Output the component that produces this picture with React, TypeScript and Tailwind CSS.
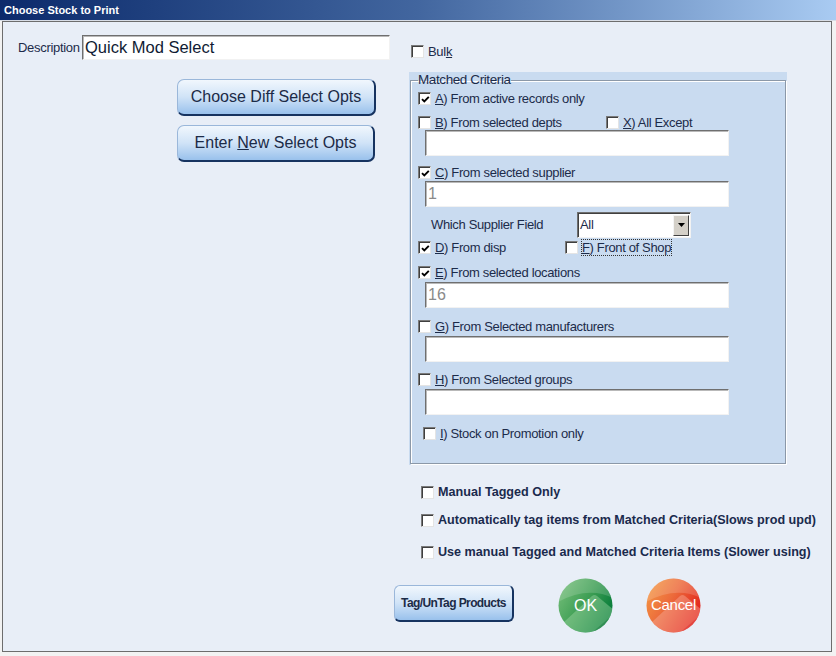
import React from "react";

const FONT = { fontFamily: '"Liberation Sans", Arial, sans-serif' };

function Check({ checked = false }: { checked?: boolean }) {
  return (
    <span className="relative inline-flex h-[13px] w-[13px] shrink-0 items-center justify-center border border-t-[#7a7a7a] border-l-[#7a7a7a] border-r-[#e4e4e4] border-b-[#e4e4e4] bg-white shadow-[inset_1px_1px_0_#3f3f3f]">
      {checked && (
        <svg width="9" height="9" viewBox="0 0 9 9" className="ml-[1px] mt-[1px]">
          <path d="M1 4.2 L3.3 6.5 L7.8 1.8" stroke="#000" strokeWidth="1.9" fill="none" />
        </svg>
      )}
    </span>
  );
}

function CbLabel({
  checked,
  u,
  rest,
  focus = false,
}: {
  checked?: boolean;
  u: string;
  rest: string;
  focus?: boolean;
}) {
  return (
    <span className="flex h-[13px] items-center">
      <Check checked={checked} />
      <span
        className={
          "ml-[4px] whitespace-nowrap text-[13px] leading-[15px] tracking-[-0.35px] text-[#1c2b4a]" +
          (focus ? " outline outline-1 outline-dotted outline-[#333]" : "")
        }
      >
        <span className="underline">{u}</span>
        {rest}
      </span>
    </span>
  );
}

function TextBox({ value = "" }: { value?: string }) {
  return (
    <div className="ml-[14px] flex h-[26px] w-[304px] items-center border border-t-[#6f6f6f] border-l-[#6f6f6f] border-r-[#f2f2f2] border-b-[#f2f2f2] bg-white pl-[2px] shadow-[inset_1px_1px_0_#b9b9b9] text-[16px] text-[#8a8a8a]">
      {value}
    </div>
  );
}

function BigButton({ children, w }: { children: React.ReactNode; w: string }) {
  return (
    <div
      className={
        "flex h-[37px] items-center justify-center rounded-[7px] border border-[#9ab7da] border-b-2 border-r-2 border-b-[#163360] border-r-[#163360] bg-gradient-to-b from-[#f1f7fd] via-[#d0e3f7] to-[#99c1ec] text-[16px] text-[#1c2b47] " +
        w
      }
    >
      {children}
    </div>
  );
}

function Orb({ kind }: { kind: "ok" | "cancel" }) {
  const ok = kind === "ok";
  const id = ok ? "gok" : "gcan";
  return (
    <div className="relative h-[55px] w-[55px]">
      <svg width="55" height="55" viewBox="0 0 55 55">
        <defs>
          <linearGradient id={id} x1="0" y1="0" x2="1" y2="0.6">
            {ok ? (
              <>
                <stop offset="0" stopColor="#7cc27e" />
                <stop offset="0.55" stopColor="#3f9f55" />
                <stop offset="1" stopColor="#047a38" />
              </>
            ) : (
              <>
                <stop offset="0" stopColor="#f5a045" />
                <stop offset="0.5" stopColor="#ec6a3b" />
                <stop offset="1" stopColor="#e2211b" />
              </>
            )}
          </linearGradient>
          <clipPath id={id + "c"}>
            <circle cx="27.5" cy="27.5" r="27" />
          </clipPath>
        </defs>
        <circle cx="27.5" cy="27.5" r="27" fill={"url(#" + id + ")"} />
        <g clipPath={"url(#" + id + "c)"}>
          <path d="M0 0 H55 V20 Q30 8 0 24 Z" fill="#ffffff" opacity="0.16" />
          <path
            d="M6 44 L34 18 Q36.5 16 39 18 L56 32 L56 58 L0 58 Z"
            fill={ok ? "#a9dcac" : "#f7b7a4"}
            opacity="0.4"
          />
          <path d="M30 58 L58 34 L58 58 Z" fill={ok ? "#00652c" : "#d3121a"} opacity="0.3" />
        </g>
      </svg>
      <span
        className={
          "absolute inset-0 flex items-center justify-center text-white " +
          (ok ? "text-[16px]" : "text-[15px] tracking-[-0.3px]")
        }
      >
        {ok ? "OK" : "Cancel"}
      </span>
    </div>
  );
}

export default function App() {
  return (
    <div className="flex h-[656px] w-[836px] flex-col bg-[#f2f2f2]" style={FONT}>
      <div className="flex h-[20px] items-center bg-gradient-to-r from-[#0c2a6b] via-[#42669f] to-[#a9cbf2] pl-[4px] text-[11px] font-bold text-white">
        Choose Stock to Print
      </div>
      <div className="h-[1px] bg-[#d8dde6]" />
      <div className="ml-[2px] mr-[4px] flex h-[631px] flex-col border border-[#6d6d6d] bg-[#e8eef7]">
        <div className="flex">
          <div className="flex w-[406px] flex-col pl-[15px] pt-[13px]">
            <div className="flex h-[25px] items-center">
              <span className="w-[64px] text-[13px] tracking-[-0.3px] text-[#1c2b4a]">Description</span>
              <div className="flex h-[25px] w-[308px] items-center border border-t-[#6f6f6f] border-l-[#6f6f6f] border-r-[#f2f2f2] border-b-[#f2f2f2] bg-white pl-[2px] shadow-[inset_1px_1px_0_#b9b9b9] text-[16.5px] text-[#0f1b33]">
                Quick Mod Select
              </div>
            </div>
            <div className="ml-[159px] mt-[19px]">
              <BigButton w="w-[199px]">Choose Diff Select Opts</BigButton>
            </div>
            <div className="ml-[159px] mt-[9px]">
              <BigButton w="w-[198px]">
                <span>
                  Enter <span className="underline">N</span>ew Select Opts
                </span>
              </BigButton>
            </div>
          </div>

          <div className="flex flex-col pt-[23px]">
            <div className="ml-[2px] flex h-[13px] items-center">
              <Check />
              <span className="ml-[4px] text-[13px] tracking-[-0.3px] text-[#1c2b4a]">
                Bul<span className="underline">k</span>
              </span>
            </div>

            <div className="mt-[14px] h-[393px] w-[378px] bg-[#c9dbf0] px-[1px]">
              <fieldset className="h-[392px] border border-[#8b98a8] shadow-[inset_1px_1px_0_#ffffff,1px_1px_0_#ffffff]">
                <legend className="ml-[7px] h-[16px] text-[13.5px] leading-[16px] tracking-[-0.4px] text-[#1c2b4a]">
                  Matched Criteria
                </legend>
                <div className="flex flex-col">
                  <div className="ml-[7px] mt-[4px]">
                    <CbLabel checked u="A" rest=") From active records only" />
                  </div>
                  <div className="ml-[7px] mt-[11px] flex">
                    <div className="w-[188px]">
                      <CbLabel u="B" rest=") From selected depts" />
                    </div>
                    <CbLabel u="X" rest=") All Except" />
                  </div>
                  <div className="mt-[1px]">
                    <TextBox />
                  </div>
                  <div className="ml-[7px] mt-[10px]">
                    <CbLabel checked u="C" rest=") From selected supplier" />
                  </div>
                  <div className="mt-[2px]">
                    <TextBox value="1" />
                  </div>
                  <div className="ml-[20px] mt-[5px] flex h-[26px] items-center">
                    <span className="w-[146px] text-[13px] tracking-[-0.35px] text-[#1c2b4a]">
                      Which Supplier Field
                    </span>
                    <div className="flex h-[26px] w-[114px] items-center justify-between border border-t-[#6f6f6f] border-l-[#6f6f6f] border-r-[#f2f2f2] border-b-[#f2f2f2] bg-white pl-[2px] pr-[1px] shadow-[inset_1px_1px_0_#404040] text-[13px] tracking-[-0.3px] text-[#1c2b4a]">
                      <span>All</span>
                      <span className="flex h-[21px] w-[16px] items-center justify-center border border-t-[#f4f4f4] border-l-[#f4f4f4] border-r-[#404040] border-b-[#404040] bg-[#d4d0c8]">
                        <svg width="7" height="4" viewBox="0 0 7 4">
                          <path d="M0 0 H7 L3.5 4 Z" fill="#000" />
                        </svg>
                      </span>
                    </div>
                  </div>
                  <div className="ml-[7px] mt-[3px] flex">
                    <div className="w-[147px]">
                      <CbLabel checked u="D" rest=") From disp" />
                    </div>
                    <CbLabel u="F" rest=") Front of Shop" focus />
                  </div>
                  <div className="ml-[7px] mt-[12px]">
                    <CbLabel checked u="E" rest=") From selected locations" />
                  </div>
                  <div className="mt-[3px]">
                    <TextBox value="16" />
                  </div>
                  <div className="ml-[7px] mt-[12px]">
                    <CbLabel u="G" rest=") From Selected manufacturers" />
                  </div>
                  <div className="mt-[3px]">
                    <TextBox />
                  </div>
                  <div className="ml-[7px] mt-[11px]">
                    <CbLabel u="H" rest=") From Selected groups" />
                  </div>
                  <div className="mt-[3px]">
                    <TextBox />
                  </div>
                  <div className="ml-[12px] mt-[12px]">
                    <CbLabel u="I" rest=") Stock on Promotion only" />
                  </div>
                </div>
              </fieldset>
            </div>

            <div className="ml-[12px] mt-[21px] flex h-[13px] items-center">
              <Check />
              <span className="ml-[4px] whitespace-nowrap text-[12.6px] font-bold text-[#1a2a4d]">Manual Tagged Only</span>
            </div>
            <div className="ml-[12px] mt-[15px] flex h-[13px] items-center">
              <Check />
              <span className="ml-[4px] whitespace-nowrap text-[12.6px] font-bold text-[#1a2a4d]">
                Automatically tag items from Matched Criteria(Slows prod upd)
              </span>
            </div>
            <div className="ml-[12px] mt-[19px] flex h-[13px] items-center">
              <Check />
              <span className="ml-[4px] whitespace-nowrap text-[12.6px] font-bold text-[#1a2a4d]">
                Use manual Tagged and Matched Criteria Items (Slower using)
              </span>
            </div>
          </div>
        </div>

        <div className="mt-[19px] flex items-start pl-[391px]">
          <div className="mt-[7px] flex h-[37px] w-[120px] items-center justify-center rounded-[6px] border border-[#9ab7da] border-b-2 border-r-2 border-b-[#163360] border-r-[#163360] bg-gradient-to-b from-[#f1f7fd] via-[#d0e3f7] to-[#99c1ec] text-[12px] font-bold tracking-[-0.6px] text-[#1c2b47]">
            Tag/UnTag Products
          </div>
          <div className="ml-[44px]">
            <Orb kind="ok" />
          </div>
          <div className="ml-[33px]">
            <Orb kind="cancel" />
          </div>
        </div>
      </div>
    </div>
  );
}
